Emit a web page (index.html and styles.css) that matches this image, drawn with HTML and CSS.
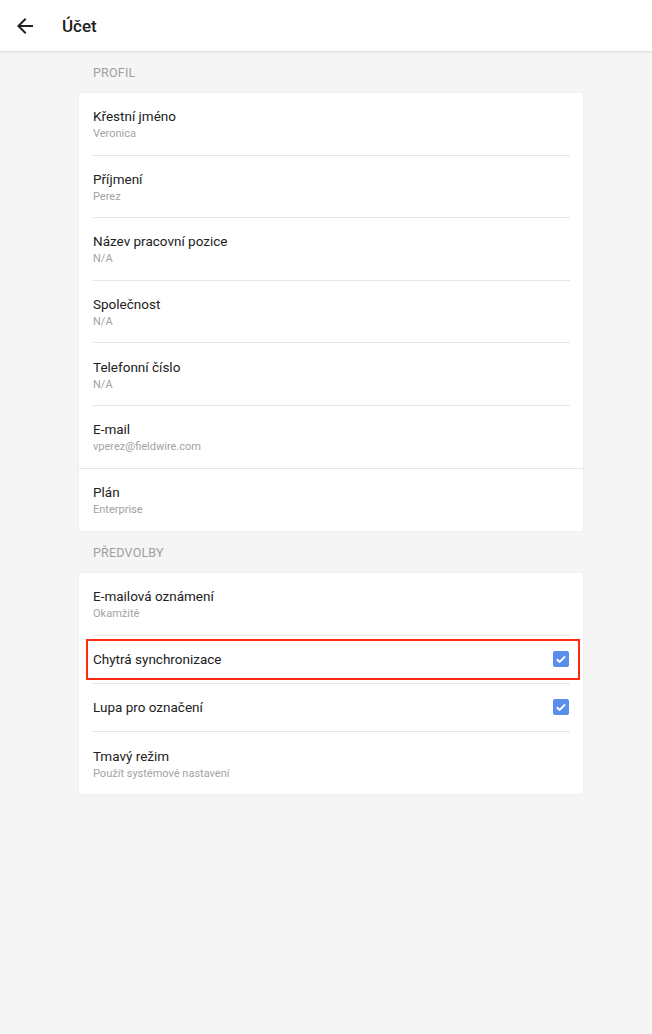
FILE: index.html
```html
<!DOCTYPE html>
<html lang="cs">
<head>
<meta charset="utf-8">
<title>Účet</title>
<link rel="stylesheet" href="styles.css">
</head>
<body>
<header class="appbar">
  <span class="back" aria-label="Zpět">
    <svg viewBox="0 0 24 24" width="24" height="24"><path d="M20 11H7.83l5.59-5.59L12 4l-8 8 8 8 1.41-1.41L7.83 13H20v-2z" fill="#212121"/></svg>
  </span>
  <h1 class="title">Účet</h1>
</header>
<main class="content">
  <div class="section-label">PROFIL</div>
  <div class="card">
    <div class="row two"><div class="t">Křestní jméno</div><div class="s">Veronica</div></div>
    <div class="row two"><div class="t">Příjmení</div><div class="s">Perez</div></div>
    <div class="row two"><div class="t">Název pracovní pozice</div><div class="s">N/A</div></div>
    <div class="row two"><div class="t">Společnost</div><div class="s">N/A</div></div>
    <div class="row two"><div class="t">Telefonní číslo</div><div class="s">N/A</div></div>
    <div class="row two full"><div class="t">E-mail</div><div class="s">vperez@fieldwire.com</div></div>
    <div class="row two last"><div class="t">Plán</div><div class="s">Enterprise</div></div>
  </div>
  <div class="section-label">PŘEDVOLBY</div>
  <div class="card">
    <div class="row two"><div class="t">E-mailová oznámení</div><div class="s">Okamžitě</div></div>
    <div class="row one highlight"><div class="t">Chytrá synchronizace</div><span class="check"><svg viewBox="0 0 16 16" width="16" height="16"><path d="M3.8 8.2l2.8 2.7L12.2 5.4" fill="none" stroke="#fff" stroke-width="1.9"/></svg></span></div>
    <div class="row one"><div class="t">Lupa pro označení</div><span class="check"><svg viewBox="0 0 16 16" width="16" height="16"><path d="M3.8 8.2l2.8 2.7L12.2 5.4" fill="none" stroke="#fff" stroke-width="1.9"/></svg></span></div>
    <div class="row two last"><div class="t">Tmavý režim</div><div class="s">Použít systémové nastavení</div></div>
  </div>
</main>
</body>
</html>
```

FILE: styles.css
```css
* { box-sizing: border-box; }
html, body { margin: 0; padding: 0; }
body {
  background: #f5f5f5;
  font-family: Roboto, "Noto Sans", "Liberation Sans", sans-serif;
  color: #212121;
  height: 1034px;
}
.appbar {
  height: 51px;
  background: #fff;
  display: flex;
  align-items: center;
  gap: 25px;
  box-shadow: 0 1px 3px rgba(0,0,0,0.12);
  position: relative;
  padding-left: 13px;
}
.back {
  width: 24px;
  height: 24px;
  flex: none;
  display: flex;
}
.title {
  margin: 0;
  font-size: 17px;
  font-weight: 500;
  color: #212121;
}
.content {
  width: 504px;
  margin-left: 79px;
}
.section-label {
  height: 42px;
  display: flex;
  align-items: center;
  padding-left: 14px;
  font-size: 12.5px;
  color: #a0a0a0;
  letter-spacing: 0.2px;
}
.card {
  background: #fff;
  box-shadow: 0 0 2px rgba(0,0,0,0.08);
}
.row {
  margin-left: 14px;
  margin-right: 13px;
  border-bottom: 1px solid #e6e6e6;
  display: flex;
}
.row.full {
  margin-left: 0;
  margin-right: 0;
  padding-left: 14px;
  padding-right: 13px;
}
.row.last { border-bottom: 0; }
.row.two {
  height: 62.6px;
  flex-direction: column;
  justify-content: center;
  padding-top: 2px;
}
.row.one {
  height: 48px;
  align-items: center;
  justify-content: space-between;
  position: relative;
}
.t {
  font-size: 13.5px;
  line-height: 17px;
  color: #212121;
}
.s {
  font-size: 11px;
  line-height: 14px;
  margin-top: 2px;
  color: #a3a3a3;
}
.check {
  width: 16px;
  height: 16px;
  border-radius: 2px;
  background: #5b8def;
  display: flex;
  align-items: center;
  justify-content: center;
  margin-right: 1px;
}
.check svg { width: 16px; height: 16px; }
.highlight::after {
  content: "";
  position: absolute;
  left: -7px;
  right: -10px;
  top: 3px;
  bottom: 3px;
  border: 2px solid #ff2a12;
  pointer-events: none;
}
```
